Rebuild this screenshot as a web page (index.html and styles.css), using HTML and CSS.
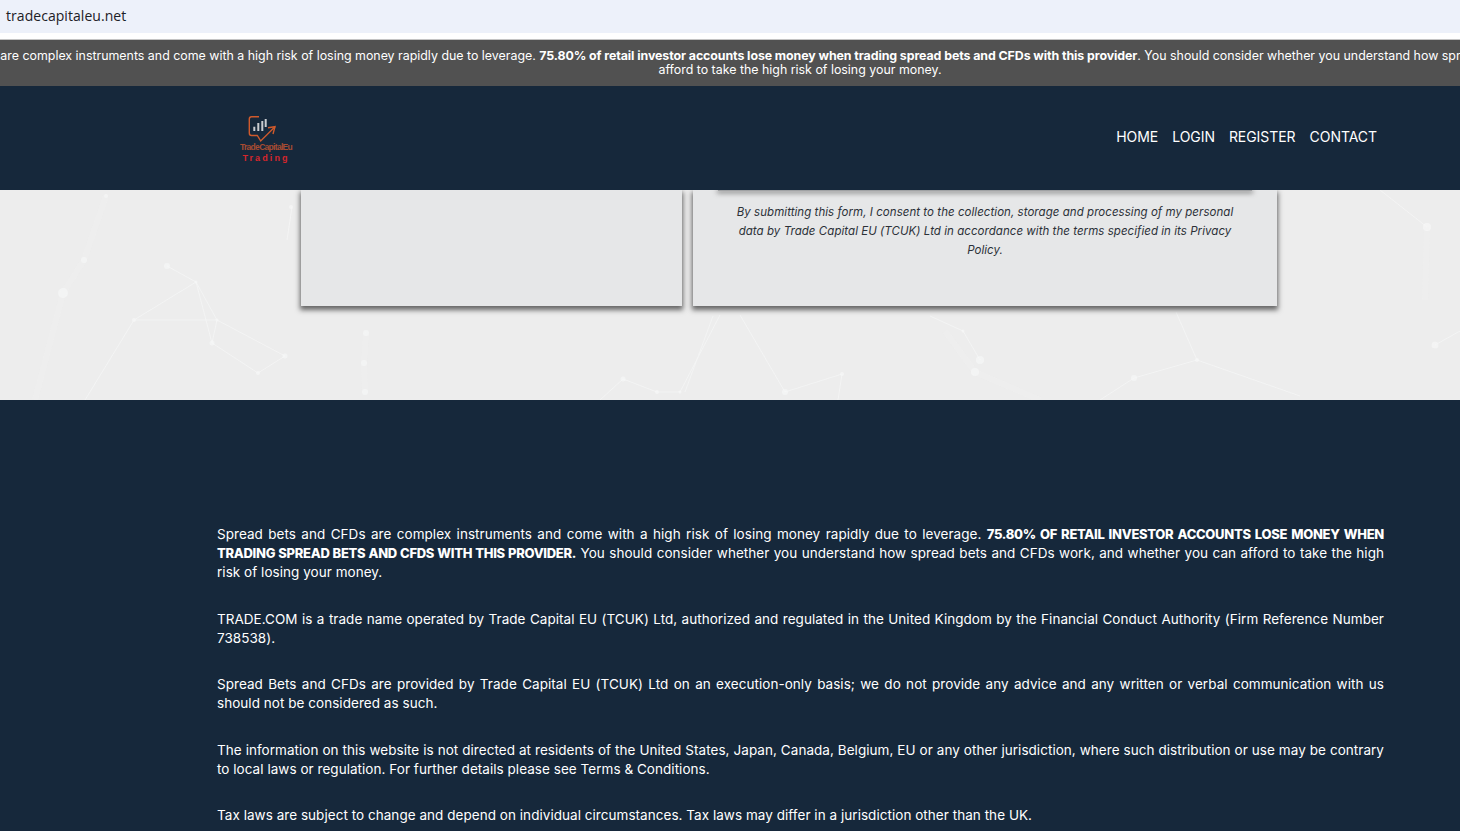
FILE: index.html
```html
<!DOCTYPE html>
<html lang="en">
<head>
    <meta charset="UTF-8">
    <meta name="viewport" content="width=device-width, initial-scale=1.0">
    <title>Trade Capital EU</title>
    <link rel="stylesheet" href="styles.css">
</head>
<body>
    <div class="address-bar">tradecapitaleu.net</div>

    <div class="risk-bar">
        <div class="risk-inner">
            <p class="risk-line">Spread bets and CFDs are complex instruments and come with a high risk of losing money rapidly due to leverage. <strong>75.80% of retail investor accounts lose money when trading spread bets and CFDs with this provider</strong>. You should consider whether you understand how spread bets and CFDs work, and whether you can</p>
            <p class="risk-line">afford to take the high risk of losing your money.</p>
        </div>
    </div>

    <header class="site-header">
        <a class="logo" href="#">
            <svg class="logo-icon" width="36" height="28" viewBox="0 0 36 28" fill="none">
                <path d="M11 1.700H3.500Q1.300 1.700 1.300 4V18Q1.300 20.500 3.500 20.500H9.300L12.700 26L27 11.700" stroke="#cf5a2c" stroke-width="1.400"/>
                <path d="M20 12.700L27 11.700L25 19" stroke="#cf5a2c" stroke-width="1.400"/>
                <path d="M6.300 16V11.700M10.300 16V8M14.300 16V6M17.700 12V4" stroke="#c9ccd0" stroke-width="2"/>
            </svg>
            <span class="logo-name">TradeCapitalEu</span>
            <span class="logo-sub">Trading</span>
        </a>
        <nav class="main-nav">
            <a href="#">HOME</a>
            <a href="#">LOGIN</a>
            <a href="#">REGISTER</a>
            <a href="#">CONTACT</a>
        </nav>
    </header>

    <section class="hero">
        <svg class="network" width="1460" height="210" viewBox="0 190 1460 210" fill="none">
            <g class="net-thick">
                <path d="M106 196L84 260L63 293L35 400"/>
                <path d="M366 333L364 363L365 392"/>
                <path d="M945 331L975 372L1040 400"/>
                <path d="M1425 300L1427 227"/>
            </g>
            <g class="net-thin">
                <path d="M167 266L196 282L134 320L217 320L196 282L212 343L217 320L285 356L258 373L212 343"/>
                <path d="M134 320L85 400"/>
                <path d="M292 207L287 240"/>
                <path d="M713 316L685 392"/>
                <path d="M740 315L785 392L842 374L838 400"/>
                <path d="M930 316L963 331L980 360"/>
                <path d="M1176 312L1197 360L1134 378L1100 400"/>
                <path d="M1197 360L1300 396"/>
                <path d="M1380 190L1427 227"/>
                <path d="M1435 345L1460 331"/>
                <path d="M623 379L657 392L680 392L720 315"/>
                <path d="M623 379L600 400"/>
            </g>
            <g class="net-dots">
                <circle cx="106" cy="196" r="2"/><circle cx="84" cy="260" r="3"/><circle cx="63" cy="293" r="5"/>
                <circle cx="167" cy="266" r="3"/><circle cx="196" cy="282" r="1.500"/><circle cx="134" cy="320" r="2"/>
                <circle cx="217" cy="320" r="1.500"/><circle cx="212" cy="343" r="2.500"/><circle cx="285" cy="356" r="2.500"/>
                <circle cx="258" cy="373" r="2"/><circle cx="291" cy="207" r="2"/><circle cx="366" cy="333" r="3"/>
                <circle cx="364" cy="363" r="3"/><circle cx="365" cy="392" r="3"/><circle cx="623" cy="379" r="2.500"/>
                <circle cx="657" cy="392" r="2"/><circle cx="680" cy="392" r="1.500"/><circle cx="785" cy="392" r="3"/>
                <circle cx="842" cy="374" r="2"/><circle cx="963" cy="331" r="1.500"/><circle cx="980" cy="360" r="4"/>
                <circle cx="975" cy="372" r="4"/><circle cx="1197" cy="360" r="2"/><circle cx="1134" cy="378" r="3"/>
                <circle cx="1427" cy="227" r="4"/><circle cx="1435" cy="345" r="3.500"/>
            </g>
        </svg>
        <div class="cards">
            <div class="card card-side"></div>
            <div class="card card-form">
                <div class="button-edge"></div>
                <p class="consent">By submitting this form, I consent to the collection, storage and processing of my personal<br>data by Trade Capital EU (TCUK) Ltd in accordance with the terms specified in its Privacy<br>Policy.</p>
            </div>
        </div>
    </section>

    <footer class="site-footer">
        <p>Spread bets and CFDs are complex instruments and come with a high risk of losing money rapidly due to leverage. <strong>75.80% OF RETAIL INVESTOR ACCOUNTS LOSE MONEY WHEN TRADING SPREAD BETS AND CFDS WITH THIS PROVIDER.</strong> You should consider whether you understand how spread bets and CFDs work, and whether you can afford to take the high risk of losing your money.</p>
        <p>TRADE.COM is a trade name operated by Trade Capital EU (TCUK) Ltd, authorized and regulated in the United Kingdom by the Financial Conduct Authority (Firm Reference Number 738538).</p>
        <p>Spread Bets and CFDs are provided by Trade Capital EU (TCUK) Ltd on an execution-only basis; we do not provide any advice and any written or verbal communication with us should not be considered as such.</p>
        <p>The information on this website is not directed at residents of the United States, Japan, Canada, Belgium, EU or any other jurisdiction, where such distribution or use may be contrary to local laws or regulation. For further details please see Terms &amp; Conditions.</p>
        <p>Tax laws are subject to change and depend on individual circumstances. Tax laws may differ in a jurisdiction other than the UK.</p>
    </footer>
</body>
</html>
```

FILE: styles.css
```css
* {
    margin: 0;
    padding: 0;
    box-sizing: border-box;
}

html, body {
    height: 100vh;
    overflow: hidden;
}

body {
    font-family: Inter, "Liberation Sans", sans-serif;
    background-color: #fff;
}

a {
    color: inherit;
    text-decoration: none;
}

.address-bar {
    height: 33px;
    padding-left: 6px;
    font-family: "Open Sans", sans-serif;
    font-size: 14px;
    line-height: 31px;
    letter-spacing: 0.05px;
    color: #1c2026;
    background-color: #edf1fa;
    margin-bottom: 6px;
}

/* Risk warning, wider than the window so both ends get cut */
.risk-bar {
    height: 47px;
    overflow: hidden;
    background-color: #515151;
    border-top: 1px solid #c4c4c4;
}

.risk-inner {
    width: 1600px;
    padding-top: 9px;
    display: flex;
    flex-direction: column;
    align-items: center;
}

.risk-line {
    flex-shrink: 0;
    white-space: nowrap;
    font-size: 12.400px;
    line-height: 14px;
    color: #fff;
}

.risk-line strong {
    font-weight: 700;
    letter-spacing: -0.09px;
}

.site-header {
    height: 104px;
    padding: 0 83px 0 239px;
    display: flex;
    align-items: center;
    justify-content: space-between;
    background-color: #16283b;
}

.logo {
    width: 54px;
    height: 50px;
    padding-top: 2px;
    display: flex;
    flex-direction: column;
    align-items: center;
}

.logo-icon {
    display: block;
    flex-shrink: 0;
}

.logo-name {
    font-family: "Liberation Sans", sans-serif;
    font-size: 8.500px;
    font-weight: bold;
    line-height: 9px;
    letter-spacing: -0.7px;
    white-space: nowrap;
    color: #a84c32;
}

.logo-sub {
    margin-top: 1px;
    font-family: "Liberation Sans", sans-serif;
    font-size: 9px;
    font-weight: bold;
    line-height: 10px;
    letter-spacing: 2.100px;
    color: #d4262c;
}

.main-nav {
    display: flex;
    gap: 14px;
    margin-top: -4px;
    font-size: 14px;
    letter-spacing: -0.05px;
    color: #fff;
}

.hero {
    position: relative;
    height: 210px;
    overflow: hidden;
    padding-left: 301px;
    background-color: #ededed;
}

.network {
    position: absolute;
    top: 0;
    left: 0;
    filter: blur(0.5px);
}

.net-thin {
    stroke: #f6f7f7;
    stroke-width: 1;
    opacity: 0.7;
}

.net-thick {
    stroke: #f2f3f3;
    stroke-width: 6;
    opacity: 0.3;
}

.net-dots {
    fill: #f6f7f7;
    opacity: 0.7;
}

.cards {
    position: relative;
    display: flex;
    gap: 11px;
}

.card {
    height: 116px;
    background-color: #e6e7e8;
    box-shadow: 0 3px 5px 1px #666;
}

.card-side {
    width: 381px;
}

.card-form {
    width: 584px;
}

.button-edge {
    width: 534px;
    height: 1px;
    margin: 0 auto;
    background-color: #a0a2a4;
    box-shadow: 0 1px 5px 1px #777;
}

.consent {
    padding-top: 12px;
    font-size: 11.500px;
    font-style: italic;
    line-height: 19px;
    letter-spacing: 0.05px;
    text-align: center;
    color: #2c3138;
}

.site-footer {
    height: 431px;
    padding: 125px 76px 0 217px;
    background-color: #16283b;
    color: #fff;
    font-size: 13.500px;
    line-height: 19px;
    letter-spacing: 0.04px;
    text-align: justify;
}

.site-footer p {
    margin-bottom: 27.600px;
}

.site-footer strong {
    font-size: 13px;
    font-weight: 800;
    letter-spacing: -0.3px;
}
```
